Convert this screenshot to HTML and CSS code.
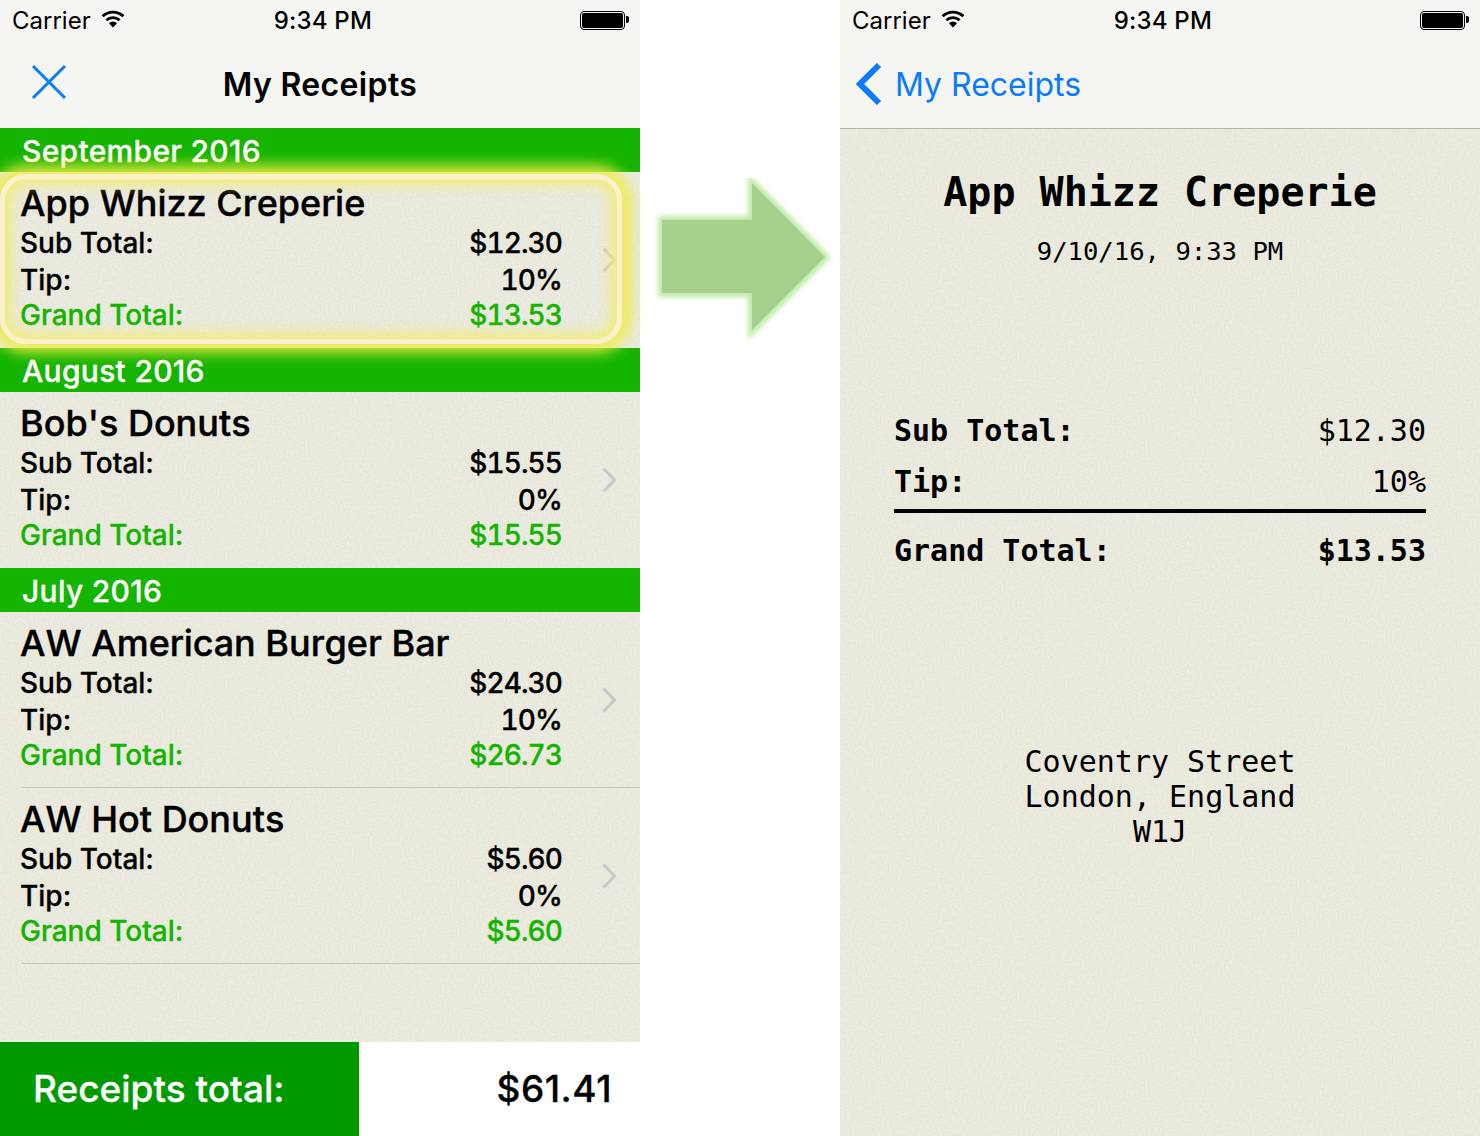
FILE: index.html
```html
<!DOCTYPE html>
<html lang="en">

<head>
	<meta charset="UTF-8">
	<title>My Receipts</title>
	<link rel="stylesheet" href="styles.css">
</head>

<body>

	<div class="page">

		<div class="phone paper">
			<div class="topbar">
				<div class="status">
					<span class="carrier">Carrier
						<svg class="wifi" width="24" height="18" viewBox="0 0 24 18"><path d="M12 17.5 8 13.2a5.8 5.8 0 0 1 8 0z" /><path d="M5.4 10.3a9.6 9.6 0 0 1 13.2 0" class="wave" /><path d="M1.6 6.3a15 15 0 0 1 20.8 0" class="wave" /></svg>
					</span>
					<span class="clock">9:34 PM</span>
					<span class="battery"><i></i></span>
				</div>
				<div class="nav">
					<svg class="close" width="36" height="36" viewBox="0 0 36 36"><path d="M2 2 34 34M34 2 2 34" /></svg>
					<h1>My Receipts</h1>
				</div>
			</div>

			<div class="list">
				<div class="month">September 2016</div>
				<div class="receipt selected">
					<div class="info">
						<div class="name">App Whizz Creperie</div>
						<div class="sum"><span>Sub Total:</span><span class="amount">$12.30</span></div>
						<div class="sum tip"><span>Tip:</span><span class="amount">10%</span></div>
						<div class="sum grand"><span>Grand Total:</span><span class="amount">$13.53</span></div>
					</div>
					<svg class="more" width="14" height="26" viewBox="0 0 14 26"><path d="M1.5 1.5 12.5 13 1.5 24.5" /></svg>
				</div>

				<div class="month">August 2016</div>
				<div class="receipt">
					<div class="info">
						<div class="name">Bob's Donuts</div>
						<div class="sum"><span>Sub Total:</span><span class="amount">$15.55</span></div>
						<div class="sum tip"><span>Tip:</span><span class="amount">0%</span></div>
						<div class="sum grand"><span>Grand Total:</span><span class="amount">$15.55</span></div>
					</div>
					<svg class="more" width="14" height="26" viewBox="0 0 14 26"><path d="M1.5 1.5 12.5 13 1.5 24.5" /></svg>
				</div>

				<div class="month">July 2016</div>
				<div class="receipt ruled">
					<div class="info">
						<div class="name">AW American Burger Bar</div>
						<div class="sum"><span>Sub Total:</span><span class="amount">$24.30</span></div>
						<div class="sum tip"><span>Tip:</span><span class="amount">10%</span></div>
						<div class="sum grand"><span>Grand Total:</span><span class="amount">$26.73</span></div>
					</div>
					<svg class="more" width="14" height="26" viewBox="0 0 14 26"><path d="M1.5 1.5 12.5 13 1.5 24.5" /></svg>
				</div>
				<div class="receipt ruled">
					<div class="info">
						<div class="name">AW Hot Donuts</div>
						<div class="sum"><span>Sub Total:</span><span class="amount">$5.60</span></div>
						<div class="sum tip"><span>Tip:</span><span class="amount">0%</span></div>
						<div class="sum grand"><span>Grand Total:</span><span class="amount">$5.60</span></div>
					</div>
					<svg class="more" width="14" height="26" viewBox="0 0 14 26"><path d="M1.5 1.5 12.5 13 1.5 24.5" /></svg>
				</div>
			</div>

			<div class="totals">
				<div class="totals-label">Receipts total:</div>
				<div class="totals-value">$61.41</div>
			</div>
		</div>

		<div class="gutter">
			<svg class="arrow" width="200" height="180" viewBox="0 0 200 180">
				<defs>
					<filter id="glow" x="-10%" y="-10%" width="120%" height="120%"><feGaussianBlur stdDeviation="2.5" /></filter>
				</defs>
				<path d="M22 42H112V5L185 79 112 152V115H22z" fill="#c0eaa8" stroke="#c0eaa8" stroke-width="8" filter="url(#glow)" />
				<path d="M22 42H112V5L185 79 112 152V115H22z" fill="#a8d08d" />
			</svg>
		</div>

		<div class="phone paper">
			<div class="topbar ruled-bar">
				<div class="status">
					<span class="carrier">Carrier
						<svg class="wifi" width="24" height="18" viewBox="0 0 24 18"><path d="M12 17.5 8 13.2a5.8 5.8 0 0 1 8 0z" /><path d="M5.4 10.3a9.6 9.6 0 0 1 13.2 0" class="wave" /><path d="M1.6 6.3a15 15 0 0 1 20.8 0" class="wave" /></svg>
					</span>
					<span class="clock">9:34 PM</span>
					<span class="battery"><i></i></span>
				</div>
				<div class="nav">
					<svg class="back" width="28" height="44" viewBox="0 0 28 44"><path d="M24 3 5 22 24 41" /></svg>
					<span class="back-label">My Receipts</span>
				</div>
			</div>

			<div class="slip">
				<div class="slip-name">App Whizz Creperie</div>
				<div class="slip-date">9/10/16, 9:33 PM</div>

				<div class="slip-sums">
					<div class="slip-row"><b>Sub Total:</b><span>$12.30</span></div>
					<div class="slip-row slip-tip"><b>Tip:</b><span>10%</span></div>
					<div class="slip-row slip-grand"><b>Grand Total:</b><b>$13.53</b></div>
				</div>

				<div class="slip-address">Coventry Street<br>London, England<br>W1J</div>
			</div>
		</div>

	</div>

</body>

</html>
```

FILE: styles.css
```css
html,
body {
	margin: 0;
	background-color: white;
}

body {
	font-family: Inter, "Liberation Sans", sans-serif;
	color: black;
	overflow: hidden;
}

.page {
	display: flex;
	width: 1480px;
	height: 1136px;
}

.phone {
	display: flex;
	flex-direction: column;
	width: 640px;
	height: 1136px;
}

.paper {
	background-color: #ecece1;
	background-image: url("data:image/svg+xml,%3Csvg xmlns='http://www.w3.org/2000/svg' width='640' height='640'%3E%3Cfilter id='n'%3E%3CfeTurbulence type='fractalNoise' baseFrequency='.5' numOctaves='3' seed='4'/%3E%3CfeColorMatrix values='0 0 0 0 .45 0 0 0 0 .45 0 0 0 0 .38 0 0 0 .3 -.09'/%3E%3C/filter%3E%3Crect width='640' height='640' filter='url(%23n)'/%3E%3C/svg%3E");
}

.gutter {
	width: 200px;
	padding-top: 178px;
}

.arrow {
	display: block;
}

/* status + nav */
.topbar {
	height: 128px;
	flex-shrink: 0;
	background-color: #f5f6f1;
}

.ruled-bar {
	height: 129px;
	border-bottom: 1px solid #b4b4ae;
	box-sizing: border-box;
}

.status {
	position: relative;
	display: flex;
	justify-content: space-between;
	align-items: center;
	height: 40px;
	padding: 0 12px;
	font-size: 24px;
}

.carrier {
	display: flex;
	align-items: center;
	gap: 10px;
	font-weight: 400;
}

.wifi {
	margin-top: -2px;
}

.wifi .wave {
	fill: none;
	stroke: black;
	stroke-width: 2.8;
}

.clock {
	font-weight: 500;
	letter-spacing: .2px;
	margin-left: -59px;
}

.battery {
	display: block;
	position: relative;
	box-sizing: border-box;
	width: 45px;
	height: 19px;
	margin-right: 3px;
	padding: 1px;
	border: 1px solid black;
	border-radius: 4px;
}

.battery i {
	display: block;
	height: 100%;
	background-color: black;
	border-radius: 2px;
}

.battery::after {
	content: "";
	position: absolute;
	right: -5px;
	top: 4px;
	width: 3px;
	height: 7px;
	background-color: black;
	border-radius: 0 2px 2px 0;
}

.nav {
	position: relative;
	display: flex;
	align-items: center;
	justify-content: center;
	height: 88px;
}

.nav h1 {
	margin: 0;
	font-size: 32px;
	font-weight: 600;
	letter-spacing: .35px;
}

.close {
	position: absolute;
	left: 31px;
	top: 24px;
}

.close path {
	fill: none;
	stroke: #0a7aff;
	stroke-width: 3;
}

.back {
	position: absolute;
	left: 15px;
	top: 22px;
}

.back path {
	fill: none;
	stroke: #0a7aff;
	stroke-width: 6;
}

.back-label {
	position: absolute;
	left: 55px;
	top: 23px;
	font-size: 32px;
	line-height: 44px;
	color: #0a7aff;
}

/* receipts list */
.list {
	flex: 1;
}

.month {
	height: 44px;
	padding-left: 22px;
	background-color: #14b400;
	color: white;
	font-size: 30px;
	font-weight: 500;
	letter-spacing: .3px;
	line-height: 46px;
	-webkit-text-stroke: .3px white;
}

.receipt {
	position: relative;
	display: flex;
	align-items: center;
	box-sizing: border-box;
	height: 176px;
	padding: 0 24px 0 20px;
}

.ruled::after {
	content: "";
	position: absolute;
	left: 21px;
	right: 0;
	bottom: 0;
	height: 1px;
	background-color: #c9c9c2;
}

.selected::before {
	content: "";
	position: absolute;
	left: 0;
	right: 18px;
	top: 2px;
	bottom: 4px;
	z-index: 1;
	box-sizing: border-box;
	border: 5px solid #fdf0cc;
	border-radius: 26px;
	box-shadow: 0 0 14px 9px rgba(240, 236, 70, .9), inset 0 0 14px 5px rgba(244, 238, 100, .9);
}

.info {
	flex: 1;
	align-self: flex-start;
	padding-top: 8px;
	margin-right: 40px;
}

.name {
	font-size: 36px;
	font-weight: 500;
	font-kerning: none;
	line-height: 47px;
	-webkit-text-stroke: .4px;
}

.sum {
	display: flex;
	justify-content: space-between;
	font-size: 28px;
	font-weight: 500;
	line-height: 32px;
	-webkit-text-stroke: .3px;
}

.amount {
	font-variant-numeric: tabular-nums;
	letter-spacing: -.9px;
}

.tip {
	margin-top: 5px;
}

.grand {
	margin-top: 3px;
	color: #14b400;
}

.more {
	flex-shrink: 0;
}

.more path {
	fill: none;
	stroke: #c7c7cc;
	stroke-width: 3;
}

.selected .more path {
	stroke: #cfcfc4;
}

/* bottom bar */
.totals {
	display: flex;
	height: 94px;
	flex-shrink: 0;
	background-color: white;
	font-size: 37px;
	font-weight: 500;
	line-height: 94px;
	-webkit-text-stroke: .3px;
}

.totals-label {
	width: 359px;
	box-sizing: border-box;
	padding-left: 33px;
	background-color: #009900;
	color: white;
}

.totals-value {
	flex: 1;
	padding-right: 28px;
	text-align: right;
	letter-spacing: .5px;
}

/* printed receipt */
.slip {
	flex: 1;
	font-family: "DejaVu Sans Mono", monospace;
	text-align: center;
}

.slip-name {
	margin-top: 36px;
	font-size: 40px;
	font-weight: bold;
	line-height: 54px;
}

.slip-date {
	margin-top: 16px;
	font-size: 25.6px;
	line-height: 32px;
}

.slip-sums {
	margin: 140px 54px 0 54px;
	font-size: 30px;
}

.slip-row {
	display: flex;
	justify-content: space-between;
	height: 51px;
	line-height: 48px;
}

.slip-tip {
	height: 51px;
	box-sizing: content-box;
	border-bottom: 4px solid black;
}

.slip-grand {
	margin-top: 14px;
}

.slip-address {
	margin-top: 166px;
	font-size: 30px;
	line-height: 35px;
}
```
